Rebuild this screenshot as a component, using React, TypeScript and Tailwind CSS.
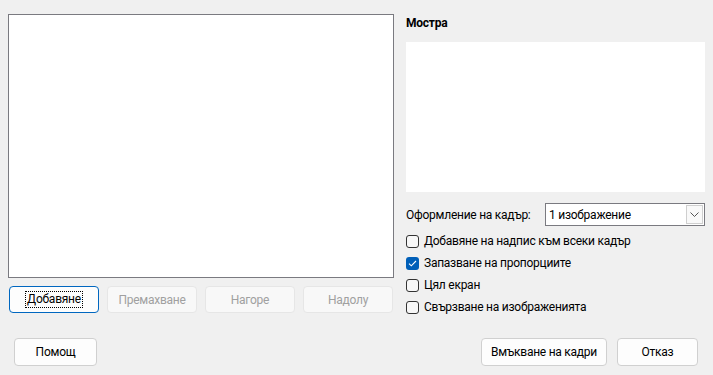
import React from 'react';

const font = { fontFamily: 'Roboto, "Liberation Sans", sans-serif' };

const Checkbox: React.FC<{ label: string; checked?: boolean }> = ({ label, checked }) => (
  <div className="flex h-[22px] items-center">
    {checked ? (
      <span className="flex h-[13px] w-[13px] items-center justify-center rounded-[3px] bg-[#005fb8]">
        <svg width="9" height="7" viewBox="0 0 9 7" fill="none">
          <path d="M1 3.6 L3.3 5.8 L8 1" stroke="white" strokeWidth="1.1" />
        </svg>
      </span>
    ) : (
      <span className="h-[13px] w-[13px] rounded-[3px] border border-[#333] bg-[#f7f7f7]" />
    )}
    <span className="ml-[5px] text-[12px] tracking-[-0.25px] text-black">{label}</span>
  </div>
);

const DisabledButton: React.FC<{ label: string }> = ({ label }) => (
  <button className="h-[27px] w-[90px] rounded-[4px] border border-[#e6e6e6] bg-[#f8f8f8] text-[12px] tracking-[-0.25px] text-[#a0a0a0]">
    {label}
  </button>
);

export default function App() {
  return (
    <div className="flex h-[375px] w-[713px] flex-col bg-[#f0f0f0]" style={font}>
      <div className="flex pl-[8px] pt-[14px]">
        {/* Left column */}
        <div className="w-[386px]">
          <div className="h-[264px] border border-[#7a7a80] bg-white" />
          <div className="mt-[8px] flex justify-between px-[1px]">
            <button className="flex h-[27px] w-[90px] items-center justify-center rounded-[4px] border border-[#0067c0] bg-[#fdfdfd] text-[12px] tracking-[-0.25px] text-black">
              <span className="border border-dotted border-black px-[1px] leading-[15px]">Добавяне</span>
            </button>
            <DisabledButton label="Премахване" />
            <DisabledButton label="Нагоре" />
            <DisabledButton label="Надолу" />
          </div>
        </div>

        {/* Right column */}
        <div className="ml-[12px] w-[299px]">
          <div className="h-[18px] text-[12px] font-bold leading-[18px] tracking-[-0.25px] text-black">Мостра</div>
          <div className="mt-[10px] h-[150px] bg-white" />
          <div className="mt-[11px] flex h-[23px] items-center">
            <span className="w-[139px] text-[12px] tracking-[-0.25px] text-black">Оформление на кадър:</span>
            <div className="flex h-[23px] w-[160px] items-center border border-[#7a7a80] bg-white">
              <span className="flex-1 pl-[3px] text-[12px] tracking-[-0.25px] text-black">1 изображение</span>
              <span className="mr-[1px] flex h-[19px] w-[17px] items-center justify-center border border-[#cfcfcf] bg-[#f9f9f9]">
                <svg width="9" height="5" viewBox="0 0 9 5" fill="none">
                  <path d="M0.5 0.5 L4.5 4.5 L8.5 0.5" stroke="#555" strokeWidth="1" />
                </svg>
              </span>
            </div>
          </div>
          <div className="mt-[4px] flex flex-col">
            <Checkbox label="Добавяне на надпис към всеки кадър" />
            <Checkbox label="Запазване на пропорциите" checked />
            <Checkbox label="Цял екран" />
            <Checkbox label="Свързване на изображенията" />
          </div>
        </div>
      </div>

      {/* Bottom buttons */}
      <div className="mt-[20px] flex items-center pl-[14px] pr-[15px] text-[12px] tracking-[-0.25px]">
        <button className="h-[28px] w-[83px] rounded-[4px] border border-[#d0d0d0] bg-[#fdfdfd] text-black">
          Помощ
        </button>
        <div className="ml-auto flex gap-[10px]">
          <button className="h-[28px] w-[126px] rounded-[4px] border border-[#d0d0d0] bg-[#fdfdfd] text-black">
            Вмъкване на кадри
          </button>
          <button className="h-[28px] w-[81px] rounded-[4px] border border-[#d0d0d0] bg-[#fdfdfd] text-black">
            Отказ
          </button>
        </div>
      </div>
    </div>
  );
}
